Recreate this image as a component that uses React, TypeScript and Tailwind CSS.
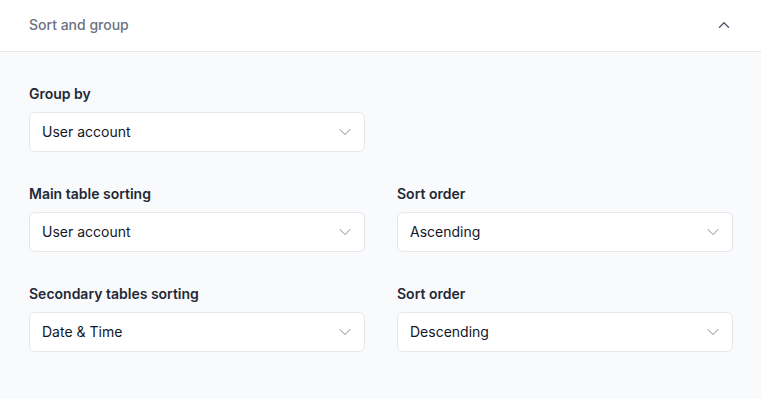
import { ChevronDown, ChevronUp } from 'lucide-react'

const rows = [
  [{ label: 'Group by', value: 'User account' }],
  [
    { label: 'Main table sorting', value: 'User account' },
    { label: 'Sort order', value: 'Ascending' },
  ],
  [
    { label: 'Secondary tables sorting', value: 'Date & Time' },
    { label: 'Sort order', value: 'Descending' },
  ],
]

function Field({ label, value }: { label: string; value: string }) {
  return (
    <div className="flex flex-col gap-2">
      <label className="text-sm font-semibold leading-5 text-[#1f2937]">{label}</label>
      <button
        type="button"
        className="flex h-10 w-full items-center justify-between rounded-md border border-[#e5e7eb] bg-white pl-3 pr-[9px] text-left text-sm text-[#111827]"
      >
        <span>{value}</span>
        <ChevronDown className="h-5 w-5 text-[#9ca3af]" strokeWidth={1.25} />
      </button>
    </div>
  )
}

export default function App() {
  return (
    <div className="min-h-[399px] bg-[#f9fafb] font-[Inter,sans-serif]">
      <div className="flex h-[52px] items-center justify-between border-b border-[#e5e7eb] bg-white pb-[2px] pl-[29px] pr-[28px]">
        <span className="text-sm font-medium text-[#6b7280]">Sort and group</span>
        <ChevronUp className="h-[18px] w-[18px] text-[#4b5563]" strokeWidth={1.75} />
      </div>
      <div className="flex flex-col gap-8 pb-8 pl-[29px] pr-[28px] pt-8">
        {rows.map((row, i) => (
          <div key={i} className="grid grid-cols-2 gap-x-8">
            {row.map((f) => (
              <Field key={f.label + f.value} label={f.label} value={f.value} />
            ))}
          </div>
        ))}
      </div>
    </div>
  )
}
